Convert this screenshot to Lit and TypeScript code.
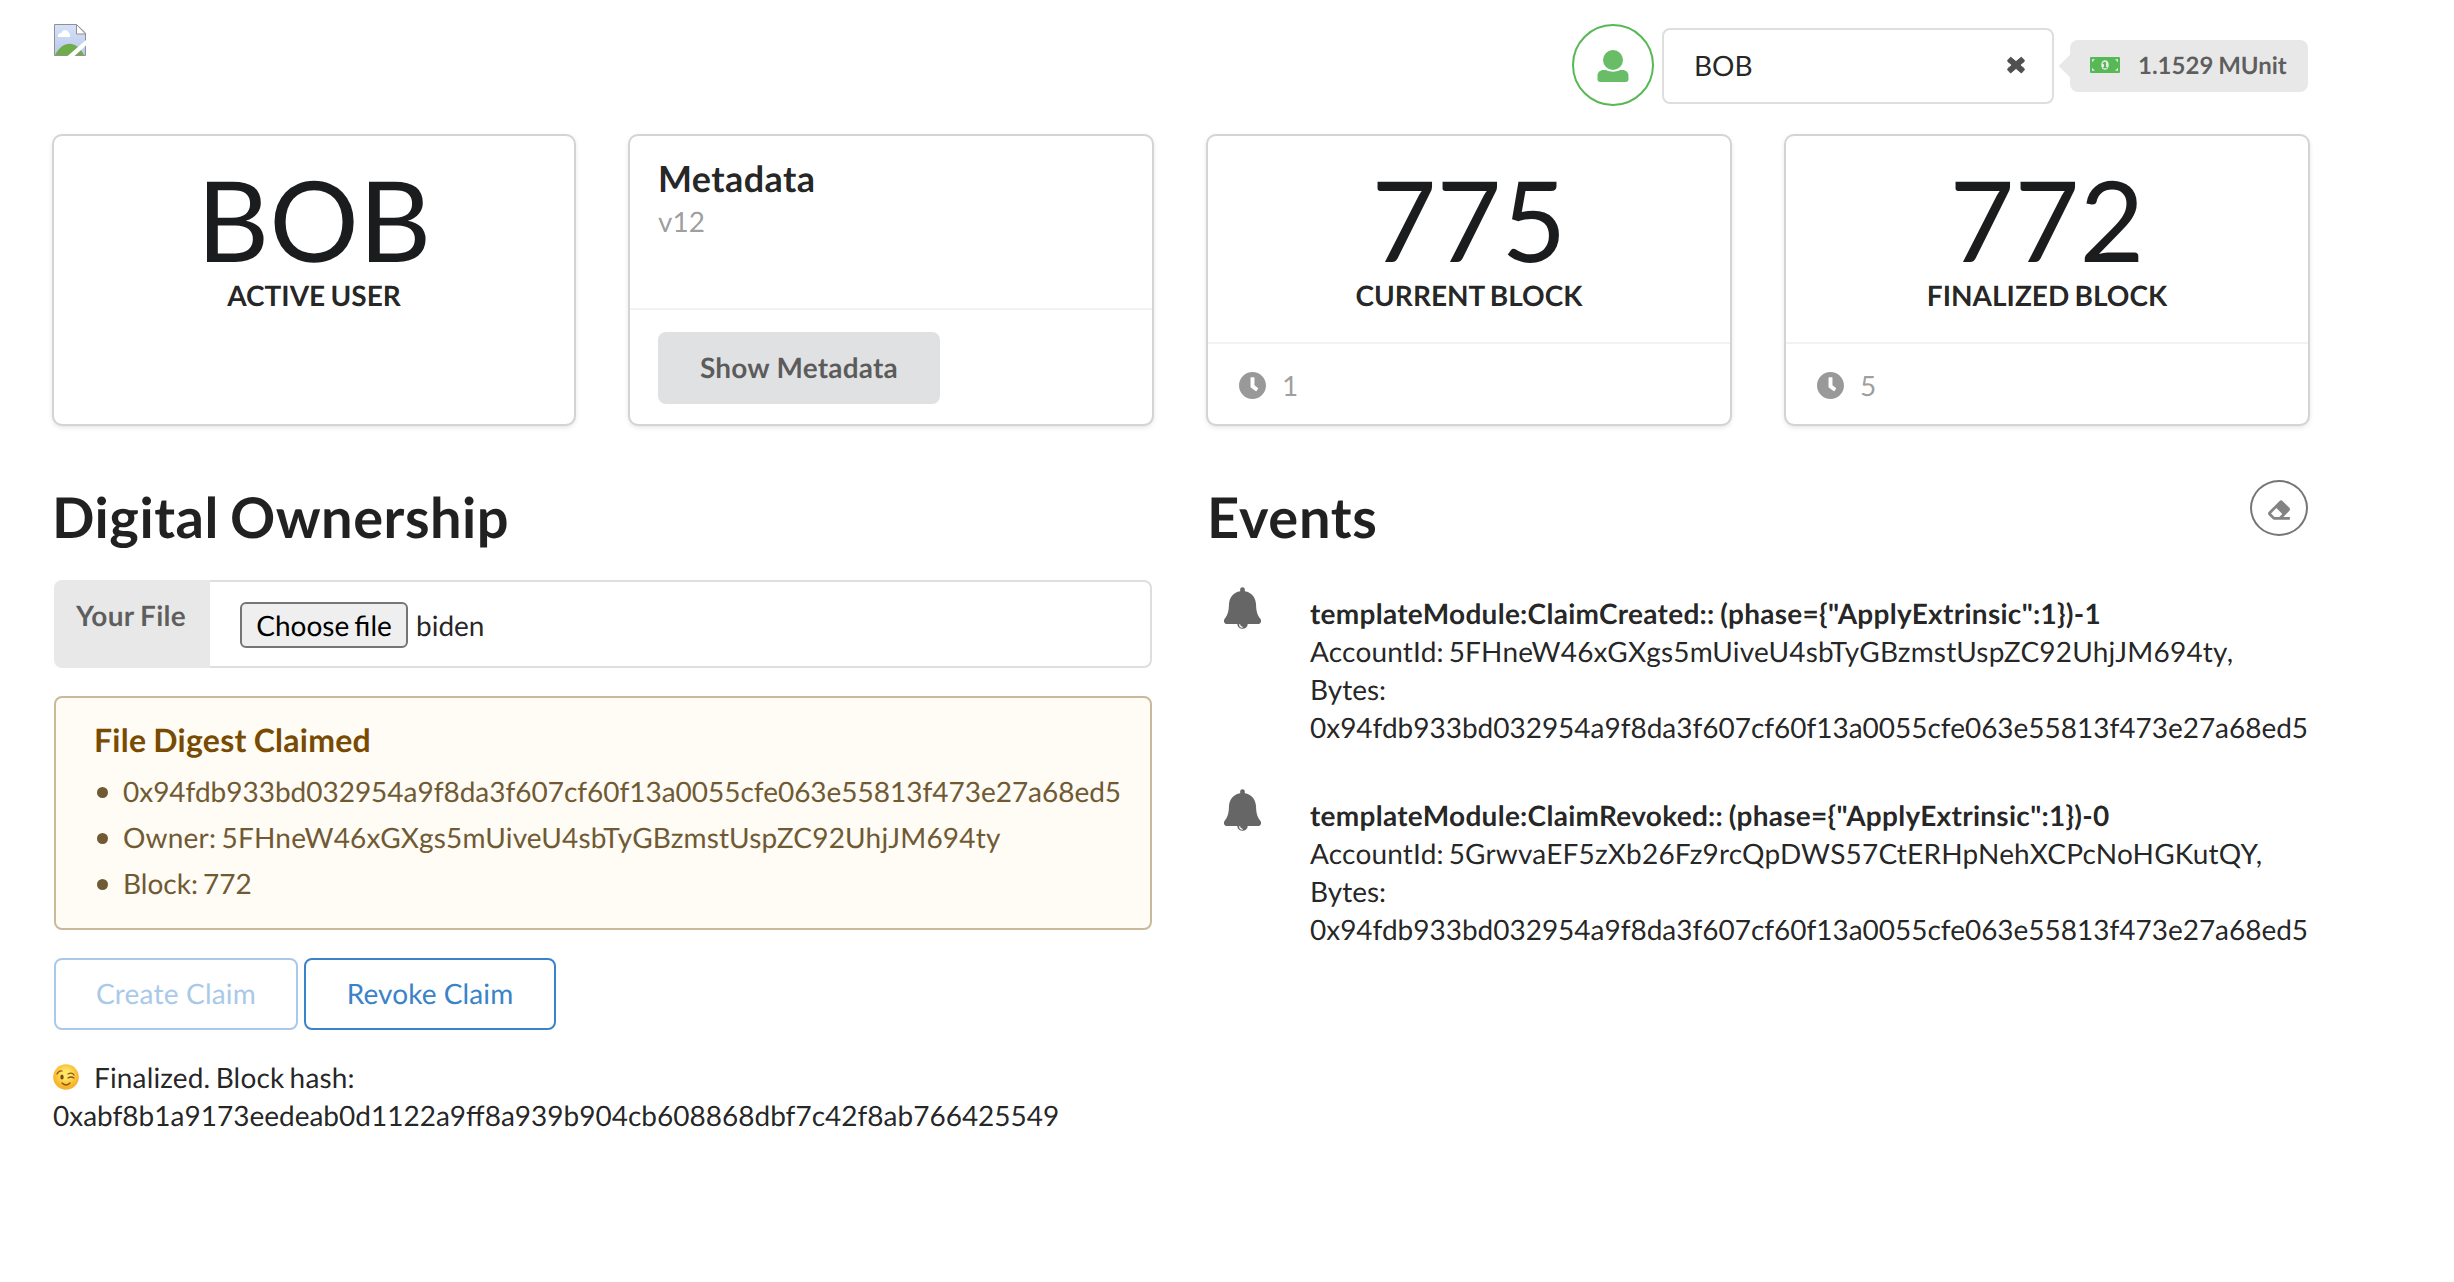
import { LitElement, html, css, svg } from "lit";
import { customElement, property } from "lit/decorators.js";

const HASH = "0x94fdb933bd032954a9f8da3f607cf60f13a0055cfe063e55813f473e27a68ed5";
const OWNER = "5FHneW46xGXgs5mUiveU4sbTyGBzmstUspZC92UhjJM694ty";

const ICONS: Record<string, { box: string; body: unknown }> = {
  user: {
    box: "0 0 32 32",
    body: svg`<circle cx="16" cy="10" r="10"/><path d="M6.500 20H9c4 2.300 10 2.300 14 0h2.500c3.500 0 6 2.400 6 5.800V29c0 2-1 3-3 3h-25c-2 0-3-1-3-3v-3.200c0-3.400 2.500-5.800 6-5.800z"/>`,
  },
  close: {
    box: "0 0 18 18",
    body: svg`<path d="M3.600 1.200L9 5.600l5.400-4.400 2.600 2.700q.8.900 0 1.800L12.800 9l4.200 3.400q.8.900 0 1.800L14.400 17 9 12.400 3.600 17 1 14.200q-.8-.900 0-1.800L5.200 9 1 5.700q-.8-.900 0-1.800z" stroke="currentColor" stroke-width="1" stroke-linejoin="round"/>`,
  },
  money: {
    box: "0 0 30 16",
    body: svg`<rect width="30" height="16" rx="1"/><g fill="#e8e8e8"><path d="M2 2.200h3L2 5.200zM28 2.200h-3l3 3zM2 13.800h3l-3-3zM28 13.800h-3l3-3z"/><ellipse cx="15" cy="8" rx="3.800" ry="4.800"/></g><path d="M14 5h2v5h1.200v1.300h-4V10H14V7l-1 .3-.3-1.300z"/>`,
  },
  clock: {
    box: "8 8 496 496",
    body: svg`<path d="M256 8C119 8 8 119 8 256s111 248 248 248 248-111 248-248S393 8 256 8zm57.100 350.100L224.900 294c-3.100-2.300-4.900-5.900-4.900-9.700V116c0-6.600 5.400-12 12-12h48c6.600 0 12 5.400 12 12v137.700l63.500 46.200c5.400 3.900 6.500 11.400 2.600 16.800l-28.200 38.800c-3.900 5.300-11.400 6.500-16.800 2.600z"/>`,
  },
  eraser: {
    box: "0 0 512 512",
    body: svg`<path d="M497.941 273.941c18.745-18.745 18.745-49.137 0-67.882l-160-160c-18.745-18.745-49.136-18.746-67.883 0l-256 256c-18.745 18.745-18.745 49.137 0 67.882l96 96A48.004 48.004 0 0 0 144 480h356c6.627 0 12-5.373 12-12v-40c0-6.627-5.373-12-12-12H355.883l142.058-142.059zm-302.627-62.627l137.373 137.373L265.373 416H150.628l-80-80 124.686-124.686z"/>`,
  },
  bell: {
    box: "0 0 37 42",
    body: svg`<path d="M16.200 2.500c0-3 4.600-3 4.600 0v1.800C27.500 5.400 31.500 10 32 17c.3 6 .5 10 4.300 14.700 1.800 2.300.4 5.300-2.500 5.300H3.200c-2.900 0-4.300-3-2.500-5.300C4.500 27 4.700 23 5 17 5.500 10 9.500 5.400 16.200 4.300z"/><path d="M13.200 36.500h10.600a5.300 5.300 0 0 1-10.600 0z"/><path d="M15.600 37.300c0 1.900 1.200 3 3 3.100" fill="none" stroke="#fff" stroke-width="1.100"/>`,
  },
};

@customElement("ui-icon")
export class UiIcon extends LitElement {
  @property() name = "user";
  static styles = css`
    :host { display: inline-flex; flex: none; }
    svg { display: block; width: 100%; height: 100%; fill: currentColor; }
  `;
  render() {
    const icon = ICONS[this.name];
    return html`<svg viewBox=${icon.box} aria-hidden="true">${icon.body}</svg>`;
  }
}

@customElement("app-root")
export class AppRoot extends LitElement {
  static styles = css`
    :host {
      display: block;
      min-height: 1282px;
      background: #fff;
      color: rgba(0, 0, 0, 0.87);
      font-family: Lato, "Helvetica Neue", Arial, sans-serif;
      font-size: 28px;
      line-height: 38px;
      text-rendering: geometricPrecision;
    }
    * { box-sizing: border-box; }
    h1, h2, p, ul { margin: 0; padding: 0; }
    button { font: inherit; text-rendering: inherit; }

    .page { width: 2308px; padding: 24px 0 0 54px; }

    .topbar { display: flex; align-items: flex-start; height: 112px; }
    .missing { width: 32px; height: 32px; margin-right: auto; }
    .account { display: flex; align-items: center; }
    .avatar {
      display: flex; align-items: center; justify-content: center;
      width: 82px; height: 82px; border: 2px solid #57b955; border-radius: 50%;
      color: #68bd66;
    }
    .avatar ui-icon { width: 32px; height: 32px; margin-top: 2px; }
    .select {
      display: flex; align-items: center; justify-content: space-between;
      width: 392px; height: 76px; margin: 2px 0 0 8px; padding: 0 27px 2px 30px;
      border: 2px solid #dedede; border-radius: 8px;
    }
    .select ui-icon { width: 18px; height: 18px; color: #505050; }
    .balance {
      position: relative; display: flex; align-items: center;
      width: 238px; height: 52px; margin: 2px 0 0 16px; padding-left: 20px;
      border-radius: 8px; background: #e8e8e8; color: rgba(0, 0, 0, 0.6);
      font-size: 24px; font-weight: 700; word-spacing: -1px;
    }
    .balance::before {
      content: ""; position: absolute; left: -8px; top: 18px;
      width: 16px; height: 16px; background: #e8e8e8; transform: rotate(45deg);
    }
    .balance ui-icon { width: 30px; height: 16px; margin: 0 18px 2px 0; color: #57b955; }

    .cards { display: grid; grid-template-columns: 520px 522px 522px 522px; justify-content: space-between; }
    .card {
      display: flex; flex-direction: column; height: 288px; border-radius: 8px;
      box-shadow: 0 2px 6px 0 #d4d4d5, 0 0 0 2px #d4d4d5;
    }
    .stat { flex: 1; padding-top: 27px; text-align: center; }
    .value { height: 112px; font-size: 112px; line-height: 112px; color: #1b1c1d; }
    .label { font-weight: 700; line-height: 40px; text-transform: uppercase; word-spacing: -1.500px; }
    .meta { flex: 1; padding: 21px 28px; }
    .meta h2 { font-size: 36px; line-height: 42px; letter-spacing: 0.4px; }
    .sub { padding-top: 3px; color: rgba(0, 0, 0, 0.4); }
    .extra { border-top: 2px solid rgba(0, 0, 0, 0.05); color: rgba(0, 0, 0, 0.4); }
    .extra.time { display: flex; align-items: center; height: 82px; padding: 2px 0 0 31px; }
    .extra.time ui-icon { width: 27px; height: 27px; margin: 1px 16px 0 0; }
    .extra.action { height: 116px; padding: 22px 28px; }
    .grey {
      display: block; width: 282px; height: 72px; padding: 0 0 2px; border: 0; border-radius: 8px;
      background: #e0e1e2; color: rgba(0, 0, 0, 0.6); font-weight: 700; letter-spacing: 0.200px;
    }

    .columns { display: grid; grid-template-columns: 1098px 1100px; justify-content: space-between; padding-top: 56px; }
    h1 { margin-left: -2px; font-size: 56px; line-height: 74px; font-weight: 700; letter-spacing: 0.500px; word-spacing: -3px; }

    .file { display: flex; height: 88px; margin-top: 26px; }
    .tag {
      width: 156px; padding: 16px 0 0 22px; border-radius: 8px 0 0 8px;
      background: #e8e8e8; color: rgba(0, 0, 0, 0.6); font-weight: 700;
      letter-spacing: 0.300px; word-spacing: -1px; white-space: nowrap;
    }
    .picker {
      display: flex; flex: 1; align-items: center; padding: 2px 0 0 30px;
      border: 2px solid #dedede; border-left: 0; border-radius: 0 8px 8px 0;
    }
    .choose {
      width: 168px; height: 46px; margin-right: 8px; padding: 0; word-spacing: -2px;
      border: 2px solid #767676; border-radius: 6px; background: #efefef; color: #000;
    }
    .warning {
      height: 234px; margin-top: 28px; padding: 23px 0 0 39px; border: 2px solid #c9ba9b;
      border-radius: 8px; background: #fffbf5; color: #6f5a34;
    }
    .warning h2 { margin-left: -1px; font-size: 32px; line-height: 38px; color: #794b02; letter-spacing: 0.250px; word-spacing: -1px; }
    .warning ul { padding-top: 9px; list-style: none; }
    .warning li { display: flex; align-items: center; height: 46px; white-space: nowrap; word-spacing: -2px; }
    .warning li::before {
      content: ""; flex: none; width: 11px; height: 11px; margin: 2px 15px 0 2px;
      border-radius: 50%; background: currentColor;
    }
    .hash { letter-spacing: -0.020px; }
    .key { letter-spacing: 0.190px; word-spacing: -2.500px; }
    .actions { display: flex; gap: 6px; padding-top: 28px; }
    .blue {
      width: 252px; height: 72px; padding: 0 0 2px; border: 2px solid #3b83c8; border-radius: 8px;
      background: #fff; color: #3b83c8; letter-spacing: 0.100px;
    }
    .blue.off { width: 244px; border-color: #a9c9e9; color: #a9c9e9; letter-spacing: 0.200px; }
    .status { margin-left: -1px; padding-top: 28px; }
    .status .line { display: flex; align-items: center; gap: 15px; letter-spacing: 0.150px; word-spacing: -2px; }
    .wink { width: 26px; height: 26px; }

    .head { display: flex; justify-content: space-between; align-items: flex-start; height: 72px; }
    .head h1 { margin-left: -1px; letter-spacing: 0.700px; }
    .round {
      display: flex; align-items: center; justify-content: center;
      width: 58px; height: 56px; padding: 4px 0 0; border: 2px solid #767676;
      border-radius: 50%; background: #fff; color: #838383;
    }
    .round ui-icon { width: 22px; height: 22px; }
    .feed { display: flex; flex-direction: column; gap: 43px; padding-top: 35px; }
    .event { display: flex; }
    .event ui-icon { width: 37px; height: 42px; margin: 0 49px 0 16px; color: #666; }
    .text { padding-top: 7px; }
    .text b { display: block; letter-spacing: 0.280px; word-spacing: -1.500px; }
  `;

  private stat(value: string, label: string, seconds?: string) {
    return html`<section class="card">
      <div class="stat"><div class="value">${value}</div><div class="label">${label}</div></div>
      ${seconds ? html`<div class="extra time"><ui-icon name="clock"></ui-icon>${seconds}</div>` : ""}
    </section>`;
  }

  private event(name: string, account: string) {
    return html`<article class="event">
      <ui-icon name="bell"></ui-icon>
      <div class="text">
        <b>${name}</b>
        <div class="key">AccountId: ${account},</div>
        <div>Bytes:</div>
        <div class="hash">${HASH}</div>
      </div>
    </article>`;
  }

  render() {
    return html`<main class="page">
      <header class="topbar">
        <svg class="missing" viewBox="0 0 32 32">
          <defs><linearGradient id="sky" x2="0" y2="1"><stop stop-color="#d5e2f8"/><stop offset="1" stop-color="#b9c8ea"/></linearGradient></defs>
          <path d="M.5.5h22L31.500 9v22.500H.5z" fill="url(#sky)" stroke="#919191"/>
          <path d="M22.500.5V10h9z" fill="#fff" stroke="#919191"/>
          <path d="M4 13c-.5-3 1.500-4 3.500-4 1-4 6-4 7.500 0 1.500 1 1.500 4 .5 4z" fill="#fff"/>
          <path d="M1 31c8-15 21-15 29 0z" fill="#6fac4a"/>
          <path d="M13.500 32L32 16v5.500L20.500 32z" fill="#fff"/>
        </svg>
        <div class="account">
          <div class="avatar"><ui-icon name="user"></ui-icon></div>
          <div class="select"><span>BOB</span><ui-icon name="close"></ui-icon></div>
          <div class="balance"><ui-icon name="money"></ui-icon>1.1529 MUnit</div>
        </div>
      </header>
      <div class="cards">
        ${this.stat("BOB", "Active User")}
        <section class="card">
          <div class="meta"><h2>Metadata</h2><div class="sub">v12</div></div>
          <div class="extra action"><button class="grey">Show Metadata</button></div>
        </section>
        ${this.stat("775", "Current Block", "1")}
        ${this.stat("772", "Finalized Block", "5")}
      </div>
      <div class="columns">
        <section>
          <h1>Digital Ownership</h1>
          <div class="file">
            <div class="tag">Your File</div>
            <div class="picker"><button class="choose">Choose file</button>biden</div>
          </div>
          <div class="warning">
            <h2>File Digest Claimed</h2>
            <ul>
              <li class="hash">${HASH}</li>
              <li class="key">Owner: ${OWNER}</li>
              <li>Block: 772</li>
            </ul>
          </div>
          <div class="actions"><button class="blue off">Create Claim</button><button class="blue">Revoke Claim</button></div>
          <div class="status">
            <div class="line">
              <svg class="wink" viewBox="0 0 26 26">
                <defs><radialGradient id="face" cy=".4"><stop offset=".3" stop-color="#ffe766"/><stop offset="1" stop-color="#f7b32b"/></radialGradient></defs>
                <circle cx="13" cy="13" r="12.800" fill="url(#face)"/>
                <ellipse cx="9" cy="13" rx="1.700" ry="2.500" fill="#7a4a10"/>
                <path d="M4 10q2-4 5-3M15 10q4-2 6 1M15 14q3-2 6 0M9 19q4 4 8 0" fill="none" stroke="#8a5513" stroke-width="1.300" stroke-linecap="round"/>
              </svg>
              <span>Finalized. Block hash:</span>
            </div>
            <p>0xabf8b1a9173eedeab0d1122a9ff8a939b904cb608868dbf7c42f8ab766425549</p>
          </div>
        </section>
        <section>
          <div class="head"><h1>Events</h1><button class="round" aria-label="Clear"><ui-icon name="eraser"></ui-icon></button></div>
          <div class="feed">
            ${this.event('templateModule:ClaimCreated:: (phase={"ApplyExtrinsic":1})-1', OWNER)}
            ${this.event('templateModule:ClaimRevoked:: (phase={"ApplyExtrinsic":1})-0', "5GrwvaEF5zXb26Fz9rcQpDWS57CtERHpNehXCPcNoHGKutQY")}
          </div>
        </section>
      </div>
    </main>`;
  }
}
